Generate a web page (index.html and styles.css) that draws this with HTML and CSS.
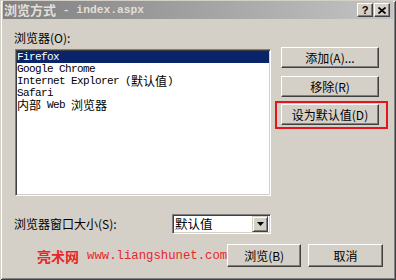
FILE: index.html
```html
<!DOCTYPE html>
<html>
<head>
<meta charset="utf-8">
<link rel="stylesheet" href="styles.css">
</head>
<body>
<div class="window">
  <div class="titlebar">
    <span class="t-cjk">浏览方式</span><span class="t-lat"> - index.aspx</span>
    <div class="tb-btns">
      <span class="tb-btn q">?</span>
      <span class="tb-btn"><svg width="8" height="7" viewBox="0 0 8 7"><path d="M0.5 0.5 L7.5 6.5 M7.5 0.5 L0.5 6.5" stroke="#000" stroke-width="1.7" fill="none"/></svg></span>
    </div>
  </div>
  <div class="body">
    <div class="main">
      <div class="left">
        <div class="label">浏览器(O):</div>
        <div class="listbox">
          <div class="item sel"><span class="lt">Firefox</span></div>
          <div class="item"><span class="lt">Google Chrome</span></div>
          <div class="item"><span class="lt">Internet Explorer (</span><span class="cj">默认值</span><span class="lt">)</span></div>
          <div class="item"><span class="lt">Safari</span></div>
          <div class="item"><span class="cj">内部</span><span class="lt"> Web </span><span class="cj">浏览器</span></div>
        </div>
      </div>
      <div class="right">
        <button class="btn">添加(A)...</button>
        <button class="btn gap8">移除(R)</button>
        <div class="hl"><button class="btn">设为默认值(D)</button></div>
      </div>
    </div>
    <div class="size-row">
      <span class="label wide">浏览器窗口大小(S):</span>
      <div class="select">
        <span class="sel-text">默认值</span>
        <span class="drop"><svg width="7" height="4" viewBox="0 0 7 4"><path d="M0 0 H7 L3.5 4 Z" fill="#000"/></svg></span>
      </div>
    </div>
    <div class="bottom">
      <span class="wm"><span class="wm-cn">亮术网</span><span class="wm-url">www.liangshunet.com</span></span>
      <button class="btn b1">浏览(B)</button>
      <button class="btn b2">取消</button>
    </div>
  </div>
</div>
</body>
</html>
```
FILE: styles.css
```css
* { box-sizing: border-box; margin: 0; padding: 0; }
body {
  margin: 0;
  width: 396px;
  height: 280px;
  overflow: hidden;
  background: #d4d0c8;
  font-family: "Noto Sans CJK SC", sans-serif;
  font-size: 12px;
  color: #000;
}
.window {
  width: 396px;
  height: 280px;
  padding: 1px 3px 3px 3px;
  background: #d4d0c8;
  box-shadow: inset 1px 1px #d4d0c8, inset -1px -1px #404040, inset 2px 2px #ffffff, inset -2px -2px #808080;
  display: flex;
  flex-direction: column;
}
.titlebar {
  height: 18px;
  background: linear-gradient(to right, #808080, #c4c4c4);
  display: flex;
  align-items: center;
  padding-left: 1px;
  color: #e2dfd8;
  white-space: pre;
}
.t-cjk { font-size: 13px; font-weight: bold; line-height: 18px; }
.t-lat { font-family: "Liberation Mono", monospace; font-size: 11.3px; font-weight: bold; line-height: 18px; }
.tb-btns { margin-left: auto; margin-right: 3px; display: flex; gap: 1px; }
.tb-btn {
  width: 16px;
  height: 14px;
  background: #d4d0c8;
  border: 1px solid;
  border-color: #ffffff #404040 #404040 #ffffff;
  box-shadow: inset -1px -1px #808080;
  display: flex;
  align-items: center;
  justify-content: center;
  color: #000;
}
.tb-btn.q { font-family: "Liberation Sans", sans-serif; font-weight: bold; font-size: 11px; line-height: 12px; }
.body {
  flex: 1;
  padding: 12px 10px 0 11px;
  display: flex;
  flex-direction: column;
}
.main { display: flex; gap: 10px; }
.left { width: 257px; }
.label { line-height: 14px; height: 14px; white-space: nowrap; }
.listbox {
  margin: 4px 0 0 1px;
  width: 256px;
  height: 147px;
  background: #fff;
  border: 1px solid;
  border-color: #808080 #ffffff #ffffff #808080;
  box-shadow: inset 1px 1px #404040, inset -1px -1px #d4d0c8;
  padding: 1px;
}
.item {
  height: 12px;
  display: flex;
  align-items: center;
  white-space: pre;
}
.item .lt {
  font-family: "Liberation Mono", monospace;
  font-size: 11px;
  letter-spacing: -0.6px;
  line-height: 12px;
}
.item .cj { font-family: "Noto Sans CJK SC", sans-serif; font-size: 12px; line-height: 12px; }
.item.sel { background: #0a246a; color: #fff; }
.right { width: 98px; padding-top: 16px; display: flex; flex-direction: column; }
.btn {
  width: 98px;
  height: 21px;
  font-family: "Noto Sans CJK SC", sans-serif;
  font-size: 12px;
  line-height: 14px;
  background: #d4d0c8;
  color: #000;
  border: 1px solid;
  border-color: #ffffff #404040 #404040 #ffffff;
  box-shadow: inset -1px -1px #808080, inset 1px 1px #d4d0c8;
  display: flex;
  align-items: center;
  justify-content: center;
}
.gap8 { margin-top: 8px; }
.hl {
  margin: 4px 0 0 -6px;
  width: 113px;
  height: 28px;
  border: 2px solid #e4161b;
  padding: 1px 0 0 4px;
}
.size-row { display: flex; align-items: center; margin-top: 18px; height: 20px; }
.label.wide { width: 158px; }
.select {
  width: 99px;
  height: 20px;
  background: #fff;
  border: 1px solid;
  border-color: #808080 #ffffff #ffffff #808080;
  box-shadow: inset 1px 1px #404040, inset -1px -1px #d4d0c8;
  padding: 2px;
  display: flex;
  align-items: center;
}
.sel-text { font-size: 12.5px; line-height: 16px; }
.drop {
  margin-left: auto;
  width: 16px;
  height: 16px;
  background: #d4d0c8;
  border: 1px solid;
  border-color: #d4d0c8 #404040 #404040 #d4d0c8;
  box-shadow: inset 1px 1px #ffffff, inset -1px -1px #808080;
  display: flex;
  align-items: center;
  justify-content: center;
}
.bottom { display: flex; align-items: center; margin-top: 10px; height: 23px; }
.wm { margin-left: 23px; margin-right: auto; color: #e8262a; white-space: nowrap; display: flex; align-items: center; }
.wm-cn { font-size: 14px; font-weight: bold; }
.wm-url { font-family: "Liberation Mono", monospace; font-size: 12.3px; margin-left: 8px; }
.btn.b1 { width: 74px; height: 23px; }
.btn.b2 { width: 75px; height: 23px; margin-left: 7px; }
```
